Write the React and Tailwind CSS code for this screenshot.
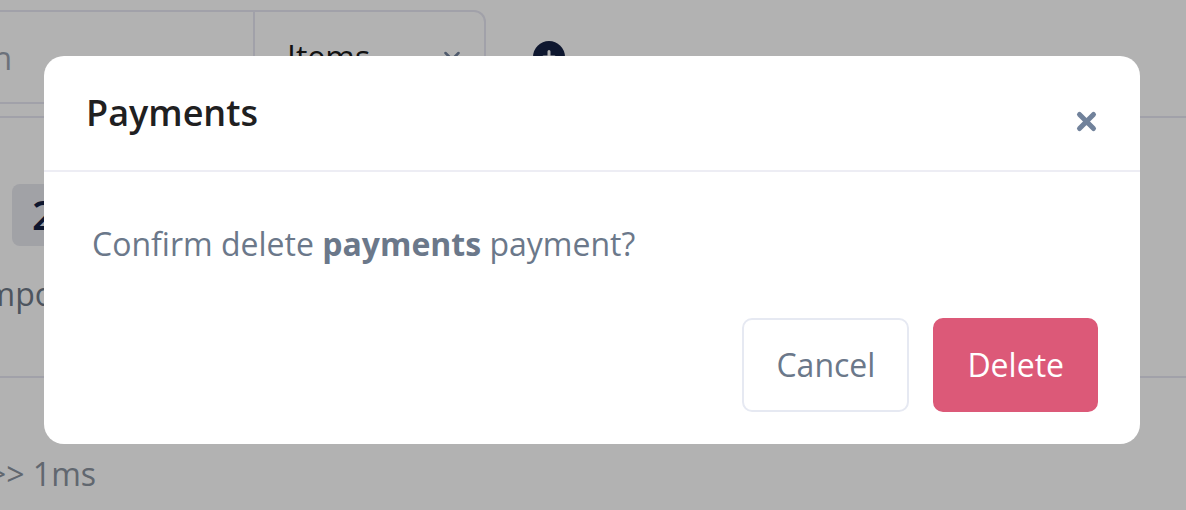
function Backdrop() {
  return (
    <main className="min-h-screen overflow-hidden bg-white text-[32px] leading-10 text-[#6f7a89]">
      <header className="flex h-[118px] items-start gap-[47px] border-b-2 border-[#e7e7f2] pt-[10px]">
        <div className="flex h-[94px] w-[486px] rounded-r-xl border-2 border-l-0 border-[#e7e7f2]">
          <div className="flex flex-1 items-center pt-0.5">
            <div className="flex w-3 justify-end overflow-hidden text-[#9aa3b0]">n</div>
          </div>
          <button className="flex w-[231px] items-center justify-between border-l-2 border-[#e7e7f2] pr-6 pl-8 text-[#1a1a1a]">
            Items
            <svg className="size-4" viewBox="0 0 16 16" fill="none" stroke="#71829b" strokeWidth="2.5" strokeLinecap="round" strokeLinejoin="round" aria-hidden="true">
              <path d="M1.5 4 8 10.5 14.5 4" />
            </svg>
          </button>
        </div>
        <button className="mt-[31px]" aria-label="Add">
          <svg className="size-8" viewBox="0 0 32 32" aria-hidden="true">
            <circle cx="16" cy="16" r="16" fill="#152144" />
            <path d="M16 10.5v11M10.5 16h11" stroke="#fff" strokeWidth="3" strokeLinecap="round" />
          </svg>
        </button>
      </header>
      <section className="h-[260px] border-b-2 border-[#e7e7f2] pt-[66px]">
        <div className="ml-3 flex h-[62px] w-16 items-center rounded-lg bg-[#e7e8ee] pl-5 text-[40px] font-semibold text-[#152144]">
          2
        </div>
        <div className="mt-7 flex w-[54px] justify-end overflow-hidden">mpo</div>
      </section>
      <div className="flex w-24 justify-end overflow-hidden pt-[76px] whitespace-nowrap text-[#8b949f]">&gt;&gt; 1ms</div>
    </main>
  );
}

export default function App() {
  return (
    <div className="font-['Open_Sans',sans-serif]">
      <Backdrop />
      <div className="fixed inset-0 bg-black/30 pt-14 pr-[46px] pl-11">
        <div role="dialog" aria-modal="true" aria-labelledby="dialog-title" className="rounded-[20px] bg-white text-[32px] leading-10 text-[#6b788a]">
          <div className="flex h-[116px] items-center justify-between border-b-2 border-[#ededf4] px-[42px]">
            <h2 id="dialog-title" className="text-[36px] leading-12 font-semibold text-[#1f2021]">Payments</h2>
            <button aria-label="Close" className="pt-4">
              <svg className="size-6" viewBox="0 0 24 24" fill="none" stroke="#71829b" strokeWidth="5" strokeLinecap="round" aria-hidden="true">
                <path d="M5.5 5.5 19.5 19.5M19.5 5.5 5.5 19.5" />
              </svg>
            </button>
          </div>
          <p className="px-12 pt-[52px]">
            Confirm delete <strong className="font-bold">payments</strong> payment?
          </p>
          <div className="flex justify-end gap-6 px-[42px] pt-[54px] pb-8">
            <button className="h-[94px] rounded-[10px] border-2 border-[#e6e9f2] px-8">Cancel</button>
            <button className="h-[94px] rounded-[10px] border-2 border-[#dc5978] bg-[#dc5978] px-8 text-white">Delete</button>
          </div>
        </div>
      </div>
    </div>
  );
}
